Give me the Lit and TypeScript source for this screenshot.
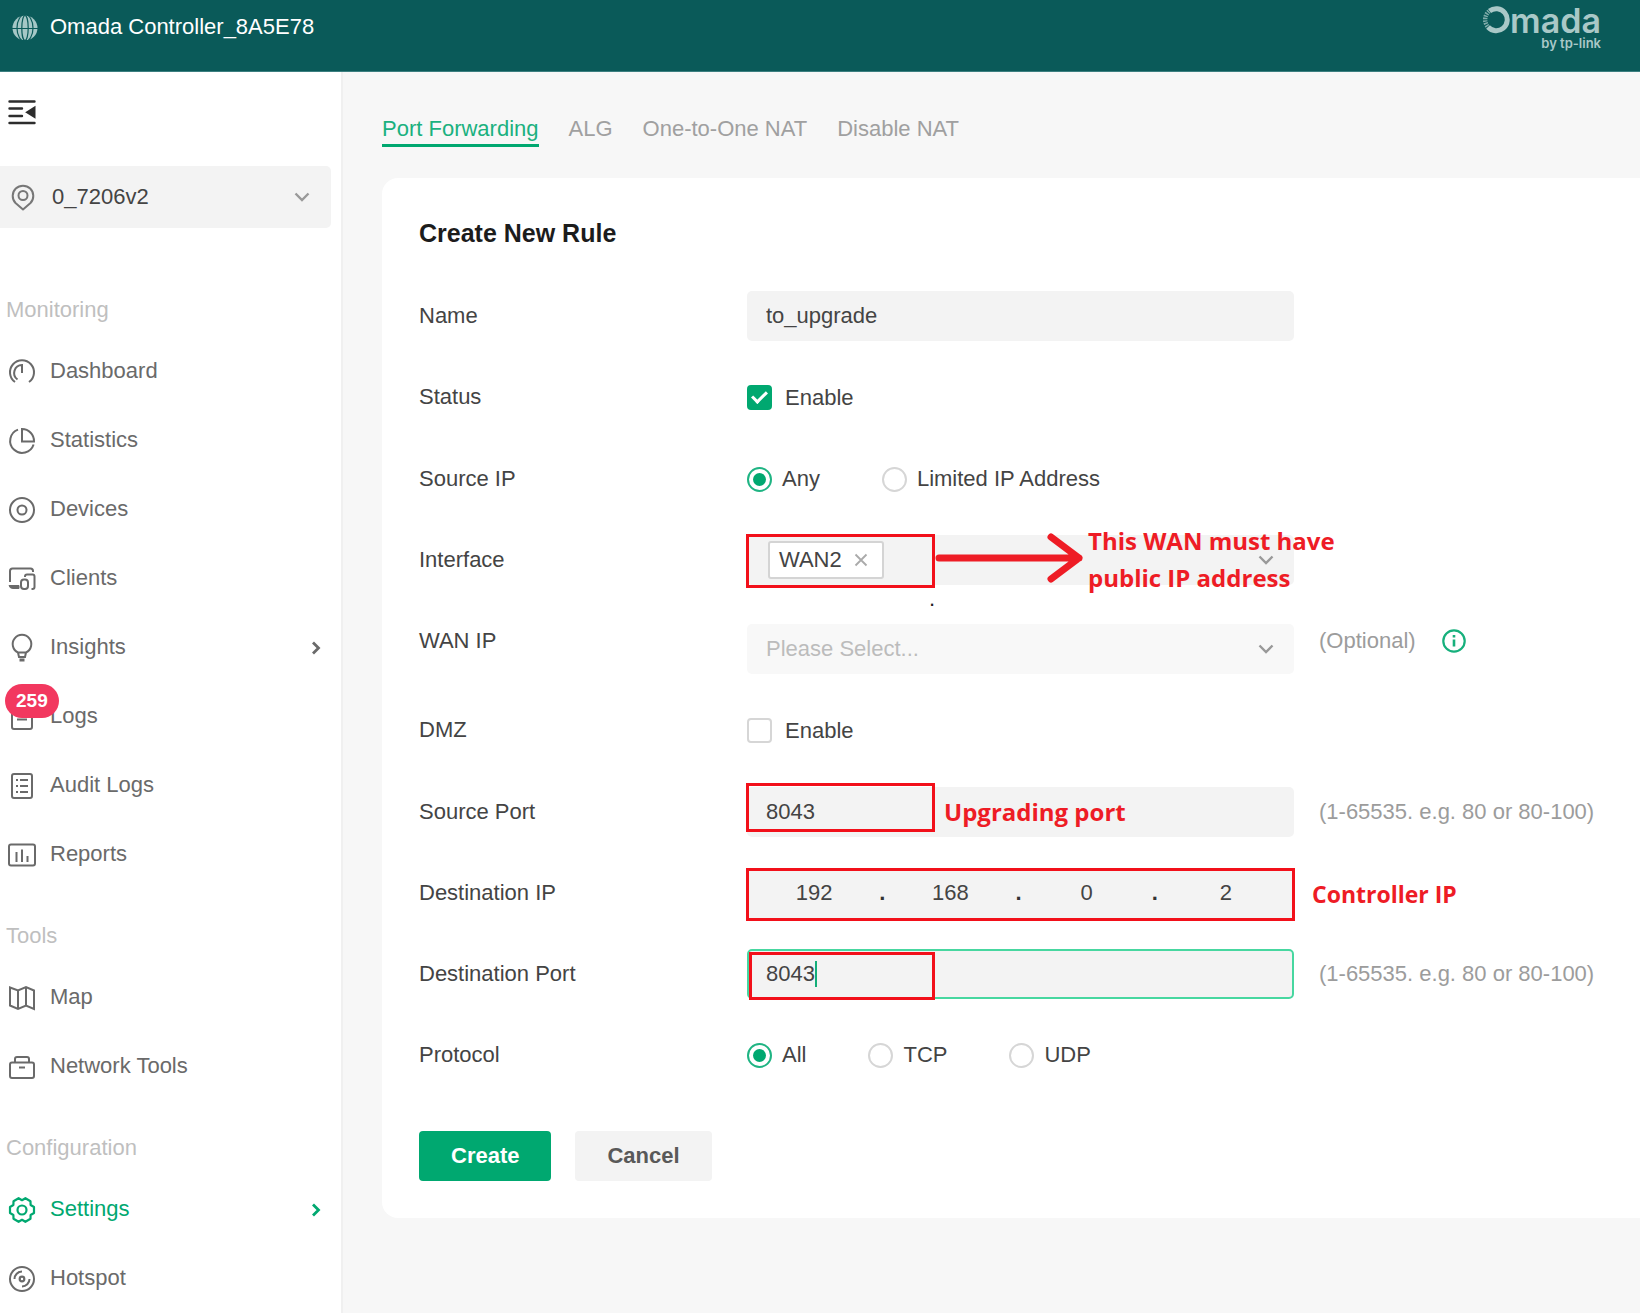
import { LitElement, html, css, svg, nothing, type TemplateResult } from "lit";
import { customElement, property, state } from "lit/decorators.js";
import { classMap } from "lit/directives/class-map.js";

const icons: Record<string, TemplateResult> = {
  dashboard: svg`<path d="M7 24A12 12 0 1 1 21 24"/><path d="M9.5 21.5A8 8 0 0 1 14 7V15"/>`,
  statistics: svg`<path d="M10 2.6A12 12 0 1 0 25.6 17.5"/><path d="M14 2V14.5H26A12 12 0 0 0 14 2Z"/>`,
  devices: svg`<circle cx="14" cy="14" r="12"/><circle cx="14" cy="14" r="4.5"/>`,
  clients: svg`<path d="M2 17V6A2.5 2.5 0 0 1 4.500 3.500H22.500A2.500 2.500 0 0 1 25 6V7"/><path d="M1 20.500H11V23.500H5A4 4 0 0 1 1 20.500Z" fill="currentColor" stroke-width="1"/><path d="M17 12V11.500A2 2 0 0 1 19 9.500H24.500A2 2 0 0 1 26.500 11.500V22A2 2 0 0 1 24.500 24H23.500"/><rect x="13" y="14.500" width="7" height="9.500" rx="3"/>`,
  insights: svg`<path d="M10 18.500A9.300 9.300 0 1 1 18 18.500L17 23H11L10 18.500H18"/><path d="M11.500 26H16.500" stroke-width="3"/>`,
  logs: svg`<rect x="4" y="2" width="20" height="24" rx="2"/><path d="M9 10H19M9 16.500H19"/>`,
  audit: svg`<rect x="4" y="2" width="20" height="24" rx="2"/><path d="M8 8H10M12 8H20M8 14H10M12 14H20M8 20H10M12 20H20"/>`,
  reports: svg`<rect x="1" y="3.500" width="26" height="21" rx="2"/><path d="M8.500 11V21M14 8.500V21M19.500 15V21"/>`,
  map: svg`<path d="M2 3.500L10 6.500L18 3L26 6.500V25L18 21.500L10 25L2 21.500Z"/><path d="M10 6.500V25M18 3V21.500"/>`,
  tools: svg`<rect x="2" y="9.500" width="24" height="15.500" rx="2"/><path d="M7 9.500V6A2 2 0 0 1 9 4H19A2 2 0 0 1 21 6V9.500M11 14.500H17"/>`,
  settings: svg`<path d="M26 11V17L22.600 19L22.500 22.800L17.400 25.800L14 23.800L10.600 25.800L5.500 22.800L5.400 19L2 17V11L5.400 9L5.500 5.200L10.600 2.200L14 4.200L17.400 2.200L22.500 5.200L22.600 9Z" stroke-linejoin="round" stroke-width="2.200"/><circle cx="14" cy="14" r="4.500" stroke-width="2.200"/>`,
  hotspot: svg`<circle cx="14" cy="14" r="12"/><circle cx="14" cy="14" r="2.300" stroke-width="2.200"/><path d="M6.500 14A7.500 7.500 0 0 1 14 6.500M21.500 14A7.500 7.500 0 0 1 14 21.500"/>`,
  pin: svg`<path d="M14 26.500L6.500 20A10.300 10.300 0 1 1 21.500 20Z" stroke-linejoin="round"/><circle cx="14" cy="12.500" r="4.500"/>`,
  collapse: svg`<g stroke-width="2.400" stroke-linecap="round"><path d="M1.500 3.500H26.500M1.500 10.500H14M1.500 18H14M1.500 25H26.500"/></g><path d="M19 14.300L26.500 9.500V19Z" fill="currentColor"/>`,
  chevronDown: svg`<path d="M7.500 10.500L14 17L20.500 10.500" stroke-width="2.400"/>`,
  chevronRight: svg`<path d="M12 8.500L17.500 14L12 19.500" stroke-width="2.800"/>`,
  close: svg`<path d="M8.500 8.500L19.500 19.500M19.500 8.500L8.500 19.500" stroke-width="1.800"/>`,
  info: svg`<circle cx="14" cy="14" r="10.700" stroke-width="2.200"/><path d="M14 12.500V19.500M14 8V10.500" stroke-width="2.600"/>`,
};

@customElement("ui-icon")
export class UiIcon extends LitElement {
  @property() name = "";

  static styles = css`
    :host { display: block; width: 28px; height: 28px; flex: none; }
    .glyph { display: block; width: 100%; height: 100%; fill: none; stroke: currentColor; stroke-width: 2; overflow: visible; }
  `;

  render() {
    return html`<svg class="glyph" viewBox="0 0 28 28" aria-hidden="true">${icons[this.name] ?? nothing}</svg>`;
  }
}

@customElement("app-header")
export class AppHeader extends LitElement {
  static styles = css`
    :host { display: block; }
    .bar { display: flex; justify-content: space-between; align-items: flex-start; box-sizing: border-box; height: 72px; padding: 0 39px 0 12px; background: #0a5a59; border-bottom: 1px solid #3c7f80; color: #fff; }
    .title { display: flex; align-items: center; gap: 12px; padding-top: 14px; font-size: 22px; line-height: 26px; }
    .globe { width: 26px; height: 26px; }
    .logo { display: flex; flex-direction: column; align-items: flex-end; color: #a9c8c7; font-family: Inter, "Open Sans", sans-serif; }
    .word { display: flex; align-items: flex-start; height: 36px; font-size: 34px; line-height: 41px; font-weight: 600; }
    .ring { width: 28px; height: 28px; margin-top: 6px; }
    .by { font-size: 13px; line-height: 14px; font-weight: 600; }
  `;

  render() {
    return html`
      <header class="bar">
        <div class="title">
          <svg class="globe" viewBox="0 0 26 26" aria-hidden="true">
            <circle cx="13" cy="14" r="12.500" fill="#a5c7c6" />
            <g fill="none" stroke="#0a5a59" stroke-width="1.200">
              <ellipse cx="13" cy="14" rx="3.200" ry="12.500" />
              <ellipse cx="13" cy="14" rx="8" ry="13.500" />
              <path d="M0 14.500H26" stroke-width="1" />
            </g>
          </svg>
          <span>Omada Controller_8A5E78</span>
        </div>
        <div class="logo">
          <div class="word">
            <svg class="ring" viewBox="0 0 28 28" aria-hidden="true">
              <path d="M7.500 5A11 11 0 1 1 6 21" fill="none" stroke="currentColor" stroke-width="5" />
              <path d="M7 5.300A11 11 0 0 0 6 21" fill="none" stroke="currentColor" stroke-width="4.400" stroke-dasharray="1.500 1" opacity="0.75" />
            </svg>
            <span>mada</span>
          </div>
          <span class="by">by tp-link</span>
        </div>
      </header>
    `;
  }
}

interface NavItem { label: string; icon: string; more?: boolean; active?: boolean; badge?: number; }

const navGroups: { title: string; items: NavItem[] }[] = [
  {
    title: "Monitoring",
    items: [
      { label: "Dashboard", icon: "dashboard" },
      { label: "Statistics", icon: "statistics" },
      { label: "Devices", icon: "devices" },
      { label: "Clients", icon: "clients" },
      { label: "Insights", icon: "insights", more: true },
      { label: "Logs", icon: "logs", badge: 259 },
      { label: "Audit Logs", icon: "audit" },
      { label: "Reports", icon: "reports" },
    ],
  },
  { title: "Tools", items: [{ label: "Map", icon: "map" }, { label: "Network Tools", icon: "tools" }] },
  {
    title: "Configuration",
    items: [{ label: "Settings", icon: "settings", more: true, active: true }, { label: "Hotspot", icon: "hotspot" }],
  },
];

@customElement("app-sidebar")
export class AppSidebar extends LitElement {
  static styles = css`
    :host { display: block; box-sizing: border-box; background: #fff; border-right: 2px solid #f0f0f0; font-size: 22px; line-height: 26px; }
    .collapse { display: block; margin: 26px 0 40px 8px; padding: 0; border: 0; background: none; color: #2d2d2d; }
    .site { position: relative; display: flex; align-items: center; margin-right: 10px; height: 62px; background: #f3f3f3; border-radius: 0 5px 5px 0; color: #777; }
    .site-pin { position: absolute; left: 9px; pointer-events: none; }
    .site-arrow { position: absolute; right: 15px; color: #999; pointer-events: none; }
    .site-select { appearance: none; width: 100%; height: 100%; padding: 0 48px 0 52px; border: 0; background: none; font: inherit; color: #444; }
    .nav { margin-top: 55px; }
    .group + .group { margin-top: 21px; }
    .heading { margin: 0; padding-left: 6px; font-size: 22px; font-weight: 400; line-height: 53px; color: #bfbfbf; }
    .list { margin: 0; padding: 0; list-style: none; }
    .item { position: relative; display: flex; align-items: center; gap: 14px; height: 69px; padding: 0 12px 0 8px; color: #6a6a6a; text-decoration: none; }
    .item.active { color: #00a870; }
    .mark { padding-top: 2px; }
    .text { flex: 1; }
    .badge { position: absolute; top: 3px; left: 5px; padding: 0 11px; border-radius: 17px; background: #f2385f; color: #fff; font-size: 19px; line-height: 34px; font-weight: 700; }
  `;

  render() {
    return html`
      <button class="collapse" aria-label="Collapse menu"><ui-icon name="collapse"></ui-icon></button>
      <div class="site">
        <ui-icon class="site-pin" name="pin"></ui-icon>
        <select class="site-select" aria-label="Site"><option>0_7206v2</option></select>
        <ui-icon class="site-arrow" name="chevronDown"></ui-icon>
      </div>
      <nav class="nav">
        ${navGroups.map((group) => html`
          <section class="group">
            <h2 class="heading">${group.title}</h2>
            <ul class="list">
              ${group.items.map((item) => html`
                <li>
                  <a href="#" class=${classMap({ item: true, active: !!item.active })}>
                    <ui-icon class="mark" name=${item.icon}></ui-icon>
                    <span class="text">${item.label}</span>
                    ${item.more ? html`<ui-icon class="mark" name="chevronRight"></ui-icon>` : nothing}
                    ${item.badge ? html`<span class="badge">${item.badge}</span>` : nothing}
                  </a>
                </li>`)}
            </ul>
          </section>`)}
      </nav>
    `;
  }
}

@customElement("rule-form")
export class RuleForm extends LitElement {
  @state() private octets = ["192", "168", "0", "2"];

  static styles = css`
    :host { display: block; padding: 40px 37px 37px; border-radius: 16px 0 0 16px; background: #fff; color: #444; font-size: 22px; line-height: 26px; }
    .title { margin: 0 0 43px; font-size: 25px; line-height: 30px; color: #1c1c1c; }
    .rows { display: flex; flex-direction: column; gap: 31px; }
    .row { display: flex; align-items: flex-start; margin: 0; padding: 0; border: 0; }
    .label { flex: 0 0 328px; line-height: 50px; }
    .field { position: relative; flex: 0 1 547px; min-width: 0; display: flex; align-items: center; height: 50px; }
    .field.check { height: 51px; }
    .field.options { gap: 62px; }
    .field.lowered { margin-top: 8px; }
    .input { box-sizing: border-box; width: 100%; height: 50px; padding: 0 17px; border: 2px solid transparent; border-radius: 5px; background: #f3f3f3; color: #444; font: inherit; outline: 0; }
    .input.focused { border-color: #47d7a0; }
    .pick { appearance: none; opacity: 1; background: #f8f8f8; color: #bcbcbc; }
    .arrow { position: absolute; right: 14px; color: #999; pointer-events: none; }
    .multi { display: flex; align-items: center; padding: 0 19px; }
    .tag { display: flex; align-items: center; gap: 5px; box-sizing: border-box; height: 38px; padding: 0 7px 0 9px; border: 2px solid #d4d4d4; border-radius: 3px; background: #fff; }
    .remove { padding: 0; border: 0; background: none; color: #aaa; }
    .hint { display: flex; align-items: center; gap: 24px; padding-left: 25px; color: #9c9c9c; line-height: 50px; white-space: nowrap; }
    .info { padding: 0; border: 0; background: none; color: #16b07c; }
    .choice { display: flex; align-items: center; gap: 10px; white-space: nowrap; }
    .choice.wide { gap: 13px; }
    .box, .radio { appearance: none; flex: none; display: grid; place-content: center; box-sizing: border-box; width: 25px; height: 25px; margin: 0; border: 2px solid #d6d6d6; background: #fff; }
    .box { border-radius: 4px; }
    .radio { border-radius: 50%; }
    .box:checked { border-color: #00a870; background: #00a870; }
    .box:checked::after { content: ""; width: 12px; height: 6px; margin-bottom: 4px; border: solid #fff; border-width: 0 0 3px 3px; transform: rotate(-45deg); }
    .radio:checked { border-color: #1fb483; }
    .radio:checked::after { content: ""; width: 13px; height: 13px; border-radius: 50%; background: #00a870; }
    .octets { box-sizing: border-box; padding-left: 2px; background: #f3f3f3; }
    .octet { flex: 1; min-width: 0; display: flex; align-items: center; }
    .octet-input { flex: 1; width: 100%; min-width: 0; padding: 0; border: 0; background: none; font: inherit; color: #444; text-align: center; }
    .dot { font-weight: 700; color: #333; }
    .actions { display: flex; gap: 24px; margin-top: 51px; }
    .button { height: 50px; padding: 0 32px; border: 0; border-radius: 4px; background: #f3f3f3; color: #595959; font: inherit; font-weight: 700; }
    .button.primary { background: #00a870; color: #fff; }
    .frame { position: absolute; box-sizing: border-box; left: -1px; width: 189px; border: 3px solid #f2101a; pointer-events: none; }
    .frame.interface { top: -1px; height: 54px; }
    .frame.source { top: -4px; height: 49px; }
    .frame.address { top: 0; width: auto; right: -1px; height: 53px; }
    .frame.target { left: 2px; width: 186px; top: 3px; height: 48px; }
    .caret { position: absolute; left: 68px; width: 2px; height: 26px; background: #12ae79; }
    .arrow-line { position: absolute; left: 188px; top: -5px; width: 150px; height: 56px; fill: none; stroke: #ee1c25; stroke-width: 7; stroke-linecap: round; stroke-linejoin: round; pointer-events: none; }
    .note { position: absolute; color: #ee1c25; font-family: "Open Sans", "Noto Sans", sans-serif; font-size: 24px; line-height: 37px; font-weight: 700; white-space: nowrap; pointer-events: none; }
    .note.interface { left: 341px; top: -13px; }
    .note.source { left: 197px; top: 6px; }
    .note.address { left: 565px; top: 8px; font-size: 23px; }
    .speck { position: absolute; left: 182px; top: 51px; color: #222; }
  `;

  private radios(group: string, options: string[]) {
    return options.map((text, i) => html`
      <label class="choice"><input class="radio" type="radio" name=${group} .checked=${i === 0} />${text}</label>`);
  }

  render() {
    return html`
      <h1 class="title">Create New Rule</h1>
      <div class="rows">
        <div class="row">
          <label class="label" for="name">Name</label>
          <div class="field"><input class="input" id="name" type="text" .value=${"to_upgrade"} /></div>
        </div>
        <div class="row">
          <span class="label">Status</span>
          <div class="field check"><label class="choice wide"><input class="box" type="checkbox" checked />Enable</label></div>
        </div>
        <div class="row" role="radiogroup" aria-label="Source IP">
          <span class="label">Source IP</span>
          <div class="field options">${this.radios("source-ip", ["Any", "Limited IP Address"])}</div>
        </div>
        <div class="row">
          <span class="label" id="interface">Interface</span>
          <div class="field">
            <div class="input multi" role="combobox" aria-expanded="false" aria-labelledby="interface" tabindex="0">
              <span class="tag">WAN2<button class="remove" aria-label="Remove WAN2"><ui-icon name="close"></ui-icon></button></span>
            </div>
            <ui-icon class="arrow" name="chevronDown"></ui-icon>
            <span class="frame interface"></span>
            <svg class="arrow-line" viewBox="0 0 150 56" aria-hidden="true"><path d="M4 28H144M116 7L144 28L116 49" /></svg>
            <span class="note interface">This WAN must have<br />public IP address</span>
            <span class="speck">.</span>
          </div>
        </div>
        <div class="row">
          <label class="label" for="wan-ip">WAN IP</label>
          <div class="field lowered">
            <select class="input pick" id="wan-ip" disabled><option>Please Select...</option></select>
            <ui-icon class="arrow" name="chevronDown"></ui-icon>
          </div>
          <span class="hint">(Optional)<button class="info" aria-label="About WAN IP"><ui-icon name="info"></ui-icon></button></span>
        </div>
        <div class="row">
          <span class="label">DMZ</span>
          <div class="field check"><label class="choice wide"><input class="box" type="checkbox" />Enable</label></div>
        </div>
        <div class="row">
          <label class="label" for="source-port">Source Port</label>
          <div class="field">
            <input class="input" id="source-port" type="text" .value=${"8043"} />
            <span class="frame source"></span>
            <span class="note source">Upgrading port</span>
          </div>
          <span class="hint">(1-65535. e.g. 80 or 80-100)</span>
        </div>
        <div class="row" role="group" aria-label="Destination IP">
          <span class="label">Destination IP</span>
          <div class="field octets">
            ${this.octets.map((value, i) => html`
              <span class="octet">
                <input class="octet-input" type="text" aria-label="Octet ${i + 1}" .value=${value} />
                ${i < 3 ? html`<span class="dot">.</span>` : nothing}
              </span>`)}
            <span class="frame address"></span>
            <span class="note address">Controller IP</span>
          </div>
        </div>
        <div class="row">
          <label class="label" for="destination-port">Destination Port</label>
          <div class="field">
            <input class="input focused" id="destination-port" type="text" .value=${"8043"} />
            <span class="caret"></span>
            <span class="frame target"></span>
          </div>
          <span class="hint">(1-65535. e.g. 80 or 80-100)</span>
        </div>
        <div class="row" role="radiogroup" aria-label="Protocol">
          <span class="label">Protocol</span>
          <div class="field options">${this.radios("protocol", ["All", "TCP", "UDP"])}</div>
        </div>
      </div>
      <div class="actions">
        <button class="button primary">Create</button>
        <button class="button">Cancel</button>
      </div>
    `;
  }
}

@customElement("app-root")
export class AppRoot extends LitElement {
  static styles = css`
    :host { display: flex; flex-direction: column; min-height: 100vh; background: #f7f7f7; font-family: "Liberation Sans", Arial, sans-serif; }
    .body { flex: 1; display: grid; grid-template-columns: 343px minmax(0, 1fr); }
    .main { padding: 44px 0 40px 39px; }
    .tabs { display: flex; gap: 30px; margin-bottom: 31px; font-size: 22px; line-height: 26px; }
    .tab { padding-bottom: 2px; border-bottom: 3px solid transparent; color: #a0a0a0; text-decoration: none; }
    .tab.active { border-color: #00a870; color: #1bb17f; }
  `;

  render() {
    const tabs = ["Port Forwarding", "ALG", "One-to-One NAT", "Disable NAT"];
    return html`
      <app-header></app-header>
      <div class="body">
        <app-sidebar></app-sidebar>
        <main class="main">
          <nav class="tabs">
            ${tabs.map((tab, i) => html`<a href="#" class=${classMap({ tab: true, active: i === 0 })}>${tab}</a>`)}
          </nav>
          <rule-form></rule-form>
        </main>
      </div>
    `;
  }
}
